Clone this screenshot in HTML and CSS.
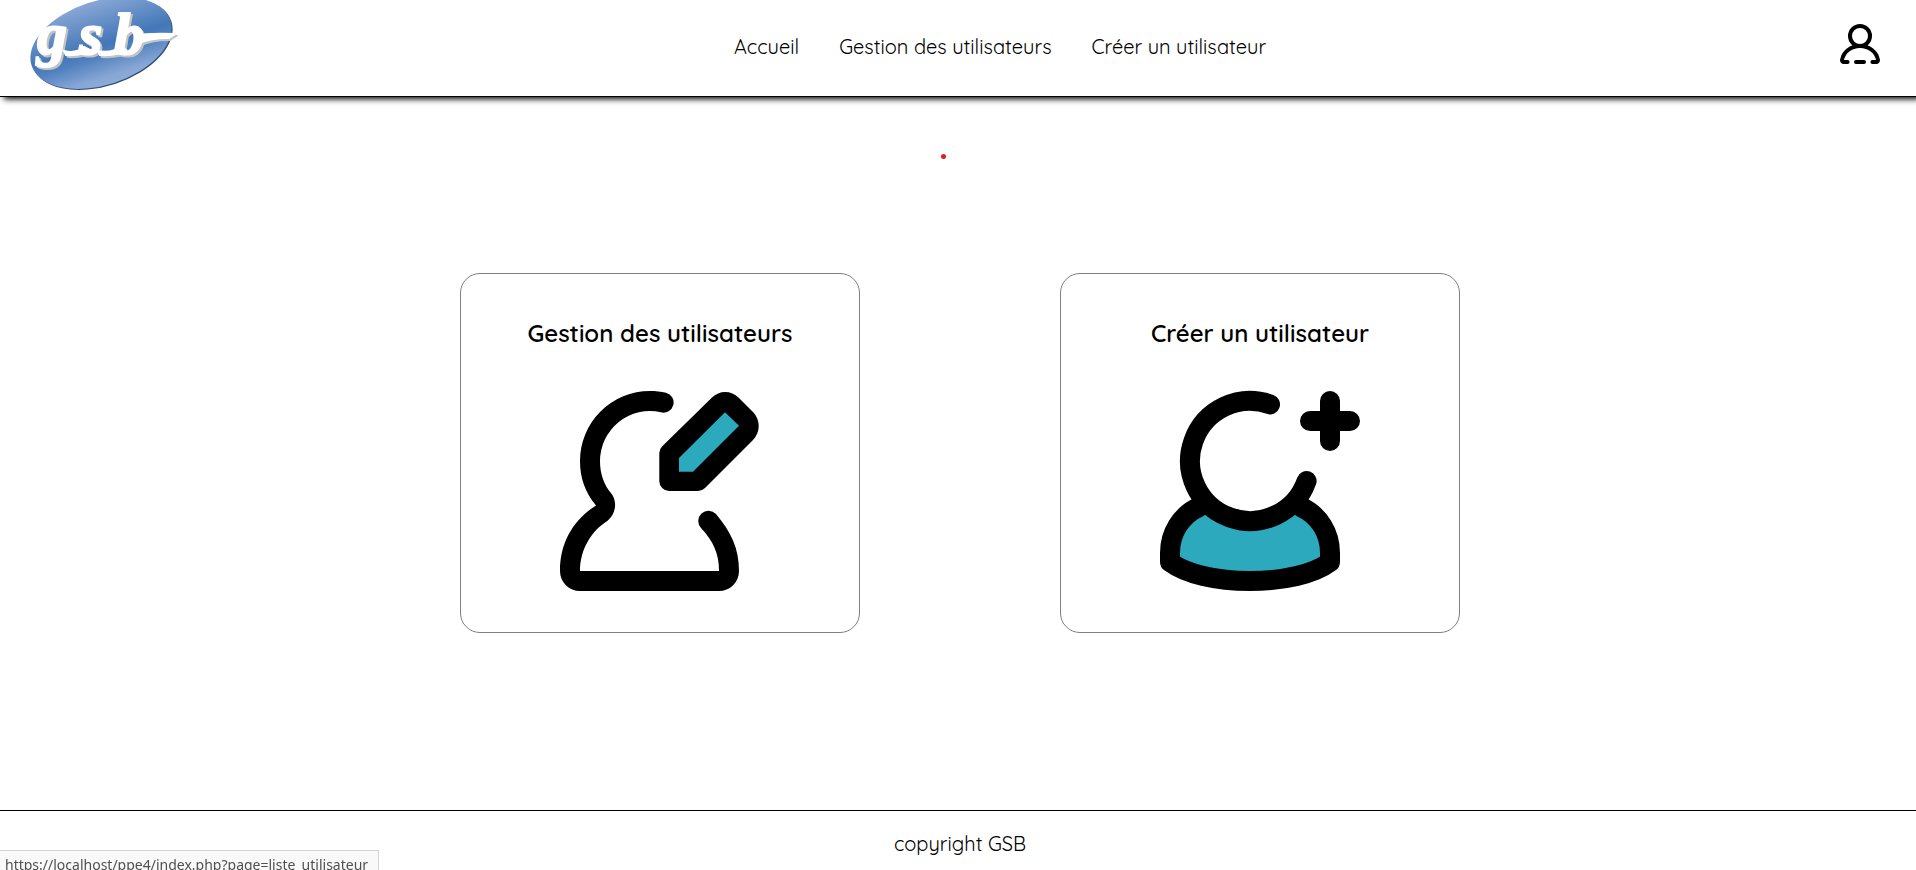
FILE: index.html
```html
<!DOCTYPE html>
<html lang="fr">
<head>
<meta charset="utf-8">
<title>GSB</title>
<meta name="viewport" content="width=device-width, initial-scale=1">
<link rel="stylesheet" href="styles.css">
</head>
<body>
<header class="header">
  <a class="logo" href="#" aria-label="gsb">
    <svg viewBox="0 0 148 90" width="148" height="90">
      <defs>
        <linearGradient id="oval" gradientUnits="userSpaceOnUse" x1="0" y1="0" x2="0" y2="90">
          <stop offset="0" stop-color="#8aa8d6"/>
          <stop offset=".5" stop-color="#4377b8"/>
          <stop offset=".62" stop-color="#5181bf"/>
          <stop offset=".85" stop-color="#86a6d5"/>
          <stop offset="1" stop-color="#92aedb"/>
        </linearGradient>
      </defs>
      <ellipse cx="72" cy="44" rx="73" ry="42" transform="rotate(-18 72 44)" fill="#2f4a73"/>
      <ellipse cx="71" cy="43" rx="73" ry="42" transform="rotate(-18 71 43)" fill="url(#oval)"/>
      <g class="logo-shade">
        <text class="logo-text" x="9 51 86" y="56">gsb</text>
        <path d="M36 53Q48 56 56 49L62 52Q54 58 38 57ZM70 53Q84 56 93 48L98 52Q90 58 72 57ZM110 38Q116 35 146 36L140 40Q120 40 110 46Z"/>
      </g>
      <g class="logo-face">
        <text class="logo-text" x="7 49 84" y="54">gsb</text>
        <path d="M34 51Q46 54 54 47L60 50Q52 56 36 55ZM68 51Q82 54 91 46L96 50Q88 56 70 55ZM108 36Q114 33 145 34L139 38Q118 38 108 44Z"/>
      </g>
    </svg>
  </a>
  <nav class="nav">
    <a href="#">Accueil</a>
    <a href="#">Gestion des utilisateurs</a>
    <a href="#">Créer un utilisateur</a>
  </nav>
  <a class="account" href="#" aria-label="Mon compte">
    <svg class="line-icon" viewBox="0 0 24 24" width="48" height="48">
      <circle cx="12" cy="8" r="5"/>
      <path d="M5.8 21H3.9A.9.9 0 0 1 3 20C3.7 16 7.4 13 12 13S20.3 16 21 20A.9.9 0 0 1 20.1 21H18.2M10 21H14"/>
    </svg>
  </a>
</header>

<main class="main">
  <span class="marker"></span>
  <div class="cards">
    <a class="card" href="#">
      <h2>Gestion des utilisateurs</h2>
      <svg viewBox="0 0 24 24" width="240" height="240">
        <path d="M12.6 2.17A1 1 0 0 1 12.1 4.13A5 5 0 0 0 6 9C6 10.3 6.4 11.4 7.17 12.3C7.8 13.2 7.5 14.4 6.73 15C5.1 16 4 17.9 4 20H17.9C17.9 18.2 17.3 17 16.1 15.7A1 1 0 0 1 17.6 14.3C19.1 16.1 19.9 17.7 19.9 20A2 2 0 0 1 17.9 22H4A2 2 0 0 1 2 20C2 17.2 3.3 14.9 5.6 13.45C4.5 12.1 4 10.7 4 9A7 7 0 0 1 11 2C11.55 2 12.1 2.06 12.6 2.17Z"/>
        <path d="M17.2 2.65A1.9 1.9 0 0 1 19.85 2.65L21.3 4.1A2 2 0 0 1 21.3 6.9L16.5 11.7A1 1 0 0 1 15.8 12H12.9A1 1 0 0 1 11.93 11V8.2A1 1 0 0 1 12.25 7.5Z"/>
        <path class="accent" d="M18.5 4.13L19.9 5.47L15.3 10.07H13.9V8.7Z"/>
      </svg>
    </a>
    <a class="card" href="#">
      <h2>Créer un utilisateur</h2>
      <svg viewBox="0 0 24 24" width="240" height="240">
        <path class="accent" d="M5.9 13.6C4.1 14.4 3 16.2 3 18.2V19.1C4.6 20.3 7.6 21 11 21S17.4 20.3 19 19.1V18.2C19 16.2 17.9 14.4 16.1 13.6A6.9 6.9 0 0 1 5.9 13.6Z"/>
        <path class="stroke" d="M13 3.34A6 6 0 1 0 16.66 11M19 3V7M17 5H21M5.9 13.6C4.1 14.4 3 16.2 3 18.2V19.1C4.6 20.3 7.6 21 11 21S17.4 20.3 19 19.1V18.2C19 16.2 17.9 14.4 16.1 13.6"/>
      </svg>
    </a>
  </div>
</main>

<footer class="footer">copyright GSB</footer>
<div class="status">https://localhost/ppe4/index.php?page=liste_utilisateur</div>
</body>
</html>
```
FILE: styles.css
```css
* { box-sizing: border-box; }

body {
  margin: 0;
  min-height: 100vh;
  display: flex;
  flex-direction: column;
  background: #fff;
  color: #000;
  font: 20px/24px Quicksand, Lato, sans-serif;
}

a { color: inherit; text-decoration: none; }
svg { display: block; }

.header {
  display: flex;
  align-items: center;
  padding: 0 16px 0 30px;
  border-bottom: 1px solid #000;
  box-shadow: 4px 2px 6px #000;
}

.logo { padding-bottom: 6px; }
.logo-text { font: italic bold 60px "Liberation Serif", serif; }
.logo-shade { fill: #c3c3c3; stroke: #c3c3c3; stroke-width: 2; }
.logo-face { fill: #fff; stroke: #fff; stroke-width: 2; }

.nav {
  flex: 1;
  display: flex;
  justify-content: center;
  gap: 40px;
  padding: 0 0 2px 2px;
}

.account { padding: 0 16px 8px; }

.line-icon,
.stroke {
  fill: none;
  stroke: #000;
  stroke-width: 2;
  stroke-linecap: round;
  stroke-linejoin: round;
}

.accent { fill: #2ca9bc; }

.main {
  flex: 1;
  display: flex;
  flex-direction: column;
  align-items: center;
  gap: 114px;
  padding: 57px 0 40px 4px;
}

.marker {
  width: 5px;
  height: 5px;
  margin-right: 34px;
  border-radius: 50%;
  background: #e31b1b;
}

.cards {
  display: flex;
  flex-wrap: wrap;
  justify-content: center;
  gap: 40px 200px;
}

.card {
  width: 400px;
  display: flex;
  flex-direction: column;
  align-items: center;
  gap: 23px;
  padding: 44px 20px 21px;
  border: 1px solid #808080;
  border-radius: 20px;
}

.card h2 {
  margin: 0;
  font-size: 24px;
  font-weight: 600;
  line-height: 30px;
}

.footer {
  padding: 21px 0 14px 4px;
  border-top: 1px solid #000;
  text-align: center;
}

.status {
  position: fixed;
  left: 0;
  bottom: 0;
  min-width: 379px;
  height: 20px;
  padding: 0 5px;
  border: solid #d4d4d4;
  border-width: 1px 1px 0 0;
  background: #f9f9f9;
  color: #505050;
  font: 14px/28px "Noto Sans", sans-serif;
  white-space: nowrap;
}
```
